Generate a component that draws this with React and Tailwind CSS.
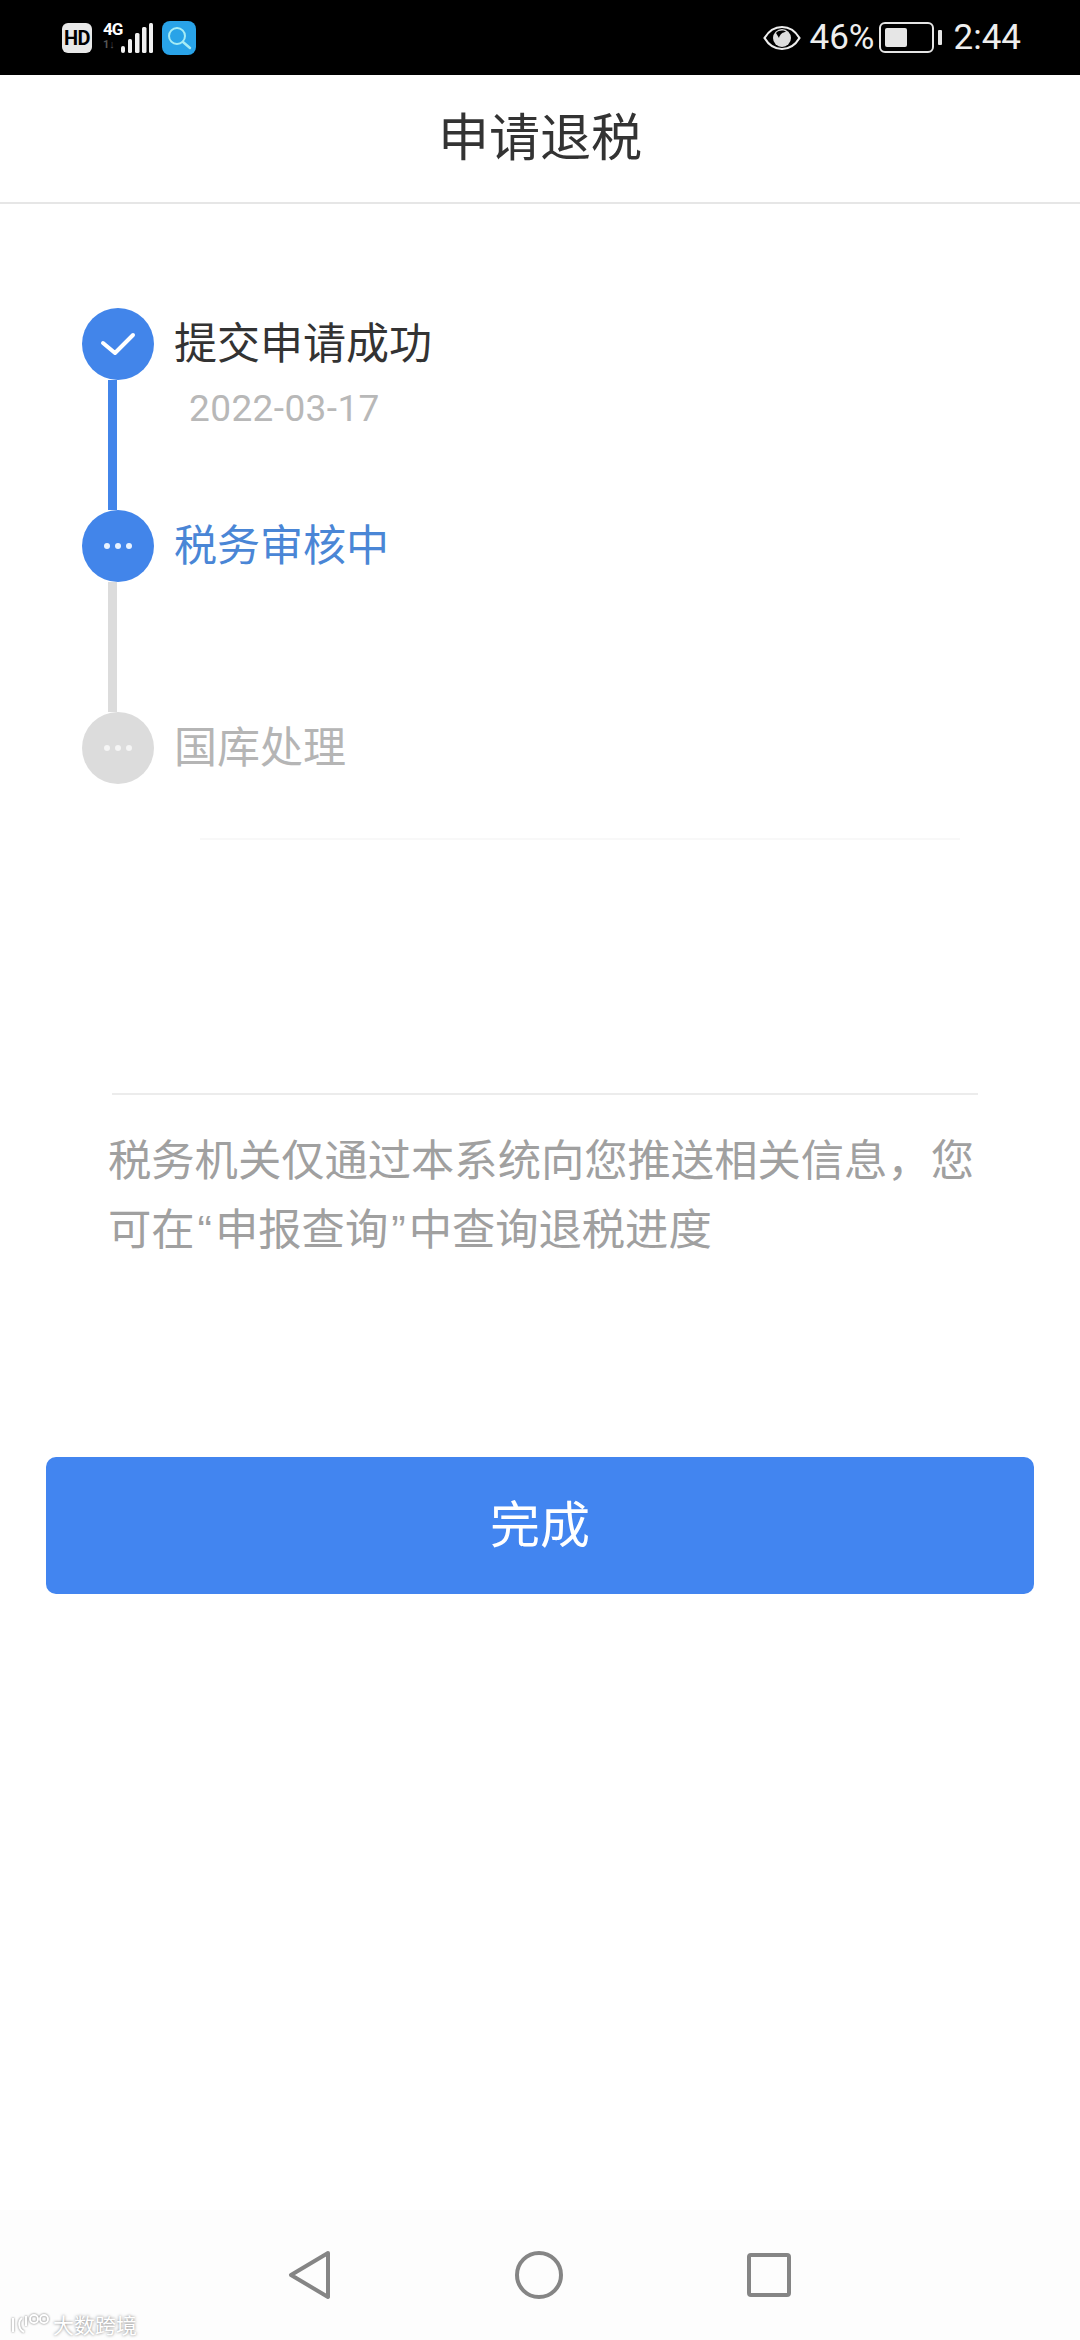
import React from "react";

const cjk = "font-['Noto_Sans_CJK_SC','Noto_Sans',sans-serif]";

const Check = () => (
  <svg width="36" height="28" viewBox="0 0 36 28" fill="none">
    <path d="M3 13l12 10L33 5" stroke="#fff" strokeWidth="4" strokeLinecap="round" strokeLinejoin="round" />
  </svg>
);

const Dots = ({ color }) => (
  <div className="flex gap-[5px]">
    {[0, 1, 2].map((i) => (
      <div key={i} className={`w-[6px] h-[6px] rounded-full ${color}`} />
    ))}
  </div>
);

const StatusLeft = () => (
  <div className="flex items-center">
    {/* HD badge */}
    <div className="w-[30px] h-[30px] rounded-[6px] bg-[#e8e8e8] flex items-center justify-center ml-[62px] text-black text-[20px] font-bold font-['Roboto',sans-serif] leading-none tracking-[-0.5px]">
      HD
    </div>
    {/* 4G + signal */}
    <div className="flex flex-col ml-[11px] w-[17px] mt-[-3px]">
      <span className="text-white text-[17px] font-bold font-['Roboto',sans-serif] leading-[16px] tracking-[-1px]">4G</span>
      <span className="text-[#555] text-[11px] font-bold font-['Roboto',sans-serif] leading-[15px]">1↓</span>
    </div>
    <svg width="34" height="32" viewBox="0 0 34 32" className="mt-[1px]">
      <rect x="1" y="24" width="4" height="7" rx="2" fill="#f1f1f1" />
      <rect x="8" y="17" width="4" height="14" rx="1.5" fill="#f1f1f1" />
      <rect x="15" y="11" width="4.5" height="20" rx="1.5" fill="#f1f1f1" />
      <rect x="22" y="5" width="4.5" height="26" rx="1.5" fill="#f1f1f1" />
      <rect x="29" y="1" width="4" height="30" rx="1.5" fill="#f1f1f1" />
    </svg>
    {/* search app */}
    <div className="w-[34px] h-[34px] rounded-[8px] bg-[#29a3e8] ml-[8px] flex items-center justify-center">
      <svg width="26" height="26" viewBox="0 0 26 26" fill="none">
        <circle cx="11" cy="11" r="8" stroke="#a6ecf5" strokeWidth="2" />
        <path d="M17 17l7 6" stroke="#a6ecf5" strokeWidth="2.5" strokeLinecap="round" />
      </svg>
    </div>
  </div>
);

const StatusRight = () => (
  <div className="flex items-center text-[#eeeeee] font-['Roboto',sans-serif] font-normal text-[35px] leading-none">
    <svg width="38" height="26" viewBox="0 0 38 26" fill="none">
      <path d="M1.5 13C6 5.500 12 2 19 2s13 3.500 17.500 11C32 20.500 26 24 19 24S6 20.500 1.500 13z" stroke="#eee" strokeWidth="2.200" />
      <circle cx="19" cy="13" r="9" fill="#ddd" />
      <path d="M13 8c3-3 8-3 10-1-3 0-6 2-7 6z" fill="#000" />
    </svg>
    <span className="ml-[9px]">46%</span>
    <div className="ml-[4px] w-[55px] h-[31px] rounded-[6px] border-2 border-[#e5e5e5] p-[4px]">
      <div className="w-[22px] h-full rounded-[2px] bg-[#e6e6e6]" />
    </div>
    <div className="ml-[4px] w-[4px] h-[15px] rounded-[1px] bg-[#e5e5e5]" />
    <span className="ml-[12px] mr-[59px]">2:44</span>
  </div>
);

const steps = [
  { label: "提交申请成功", date: "2022-03-17", circle: "bg-[#4285ea]", line: "bg-[#4285ea]", text: "text-[#333333]", icon: <Check /> },
  { label: "税务审核中", circle: "bg-[#4285ea]", line: "bg-[#dcdcdc]", text: "text-[#4a86d6]", icon: <Dots color="bg-[#e8f2ff]" /> },
  { label: "国库处理", circle: "bg-[#dcdcdc]", text: "text-[#b5b5b5]", icon: <Dots color="bg-[#f5f5f5]" /> },
];

const Step = ({ step }) => (
  <div className="flex">
    <div className="flex flex-col w-[72px] shrink-0">
      <div className={`w-[72px] h-[72px] rounded-full flex items-center justify-center ${step.circle}`}>
        {step.icon}
      </div>
      {step.line && <div className={`w-[9px] h-[130px] ml-[26px] ${step.line}`} />}
    </div>
    <div className="ml-[20px]">
      <div className={`text-[43px] leading-[64px] ${step.text}`}>{step.label}</div>
      {step.date && (
        <div className="ml-[15px] mt-[15px] text-[37px] leading-[44px] tracking-[0.4px] text-[#b8b8b8] font-['Roboto',sans-serif]">
          {step.date}
        </div>
      )}
    </div>
  </div>
);

const Quote = ({ children }) => <span className="font-['Liberation_Sans',sans-serif] mx-[3px]">{children}</span>;

export default function App() {
  return (
    <div className={`w-[1080px] h-[2340px] bg-white flex flex-col overflow-hidden ${cjk}`}>
      {/* status bar */}
      <div className="h-[75px] bg-black flex items-center justify-between shrink-0">
        <StatusLeft />
        <StatusRight />
      </div>

      {/* header */}
      <div className="h-[129px] shrink-0 border-b-2 border-[#e6e6e6] flex items-center justify-center pb-[8px] text-[51px] text-[#333333]">
        申请退税
      </div>

      {/* timeline */}
      <div className="pt-[104px] pl-[82px] h-[634px] shrink-0 flex flex-col">
        {steps.map((step) => (
          <Step key={step.label} step={step} />
        ))}
      </div>

      {/* faint rule left under the timeline */}
      <div className="h-[2px] ml-[200px] w-[760px] bg-[#f8f8f8] shrink-0" />

      {/* note */}
      <div className="mt-[253px] ml-[112px] h-[2px] w-[866px] bg-[#ececec] shrink-0" />
      <div className="mt-[28px] ml-[108px] w-[880px] text-[43.300px] leading-[69px] text-[#a0a0a0]">
        税务机关仅通过本系统向您推送相关信息，您
        <br />
        可在<Quote>“</Quote>申报查询<Quote>”</Quote>中查询退税进度
      </div>

      {/* button */}
      <div className="mt-[192px] ml-[46px] w-[988px] h-[137px] rounded-[10px] bg-[#4285f0] text-white text-[50px] flex items-center justify-center pb-[8px] shrink-0">
        完成
      </div>

      {/* nav bar */}
      <div className="mt-auto h-[130px] bg-[#fdfdfd] shrink-0 flex justify-center pt-[40px] gap-[183px] relative">
        <svg width="44" height="50" viewBox="0 0 44 50" fill="none">
          <path d="M40 3L3 25l37 22z" stroke="#858585" strokeWidth="4" strokeLinejoin="round" />
        </svg>
        <svg width="48" height="50" viewBox="0 0 48 50" fill="none">
          <circle cx="24" cy="25" r="22" stroke="#858585" strokeWidth="4" />
        </svg>
        <svg width="46" height="50" viewBox="0 0 46 50" fill="none">
          <rect x="3" y="5" width="40" height="40" rx="2" stroke="#858585" strokeWidth="4" />
        </svg>
        {/* watermark */}
        <div className="absolute left-[10px] bottom-[4px] flex items-center text-white text-[21px] leading-none [text-shadow:0_0_3px_#777]">
          <svg width="40" height="24" viewBox="0 0 40 24" fill="none" stroke="#fff" strokeWidth="2" className="drop-shadow-[0_0_1px_#777]">
            <path d="M3 6v14M12 6c-4 3-4 11 2 14M16 4v10" />
            <circle cx="24" cy="7" r="4" />
            <circle cx="34" cy="7" r="4" />
          </svg>
          <span className="ml-[3px]">大数跨境</span>
        </div>
      </div>
    </div>
  );
}
